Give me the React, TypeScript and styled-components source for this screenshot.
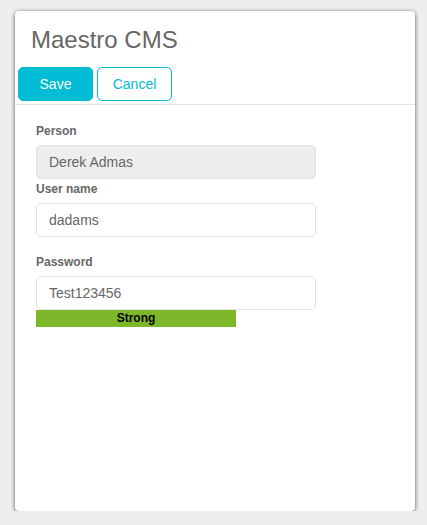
import { createGlobalStyle, styled } from "styled-components"

const GlobalStyle = createGlobalStyle`
  html, body {
    margin: 0;
    background: #eeeeee;
  }
  body {
    padding: 11px 0 0 15px;
    font-family: "Liberation Sans", Arial, sans-serif;
  }
`

const Card = styled.div`
  width: 400px;
  height: 500px;
  background: #ffffff;
  border-radius: 4px;
  box-shadow: 0 1px 4px rgba(0, 0, 0, 0.65);
  display: flex;
  flex-direction: column;
`

const Header = styled.div`
  padding: 15px 0 0 0;
  border-bottom: 1px solid #e4e4e4;
`

const Title = styled.h1`
  margin: 0 0 13px 16px;
  font-size: 24px;
  font-weight: normal;
  line-height: 28px;
  color: #666666;
`

const Toolbar = styled.div`
  display: flex;
  gap: 4px;
  padding: 0 0 3px 3px;
`

const Button = styled.button<{ $primary?: boolean }>`
  width: 75px;
  height: 34px;
  box-sizing: border-box;
  border-radius: 5px;
  font-family: inherit;
  font-size: 14px;
  cursor: pointer;
  border: 1px solid #00bcd4;
  background: ${(p) => (p.$primary ? "#00bcd4" : "#ffffff")};
  color: ${(p) => (p.$primary ? "#ffffff" : "#00bcd4")};
`

const Form = styled.div`
  padding: 19px 0 0 21px;
  display: flex;
  flex-direction: column;
`

const Field = styled.div<{ $gap: number }>`
  display: flex;
  flex-direction: column;
  margin-top: ${(p) => p.$gap}px;
`

const Label = styled.label`
  font-size: 12px;
  font-weight: bold;
  line-height: 14px;
  color: #666666;
  margin-bottom: 7px;
`

const Input = styled.input<{ $readOnly?: boolean }>`
  width: 280px;
  height: 34px;
  box-sizing: border-box;
  padding: 0 12px;
  border: 1px solid #e2e2e2;
  border-radius: 5px;
  background: ${(p) => (p.$readOnly ? "#eeeeee" : "#ffffff")};
  font-family: inherit;
  font-size: 14px;
  color: #666666;
  outline: none;
`

const Strength = styled.div`
  width: 200px;
  height: 17px;
  background: #7cb82a;
  color: #000000;
  font-size: 12px;
  font-weight: bold;
  line-height: 17px;
  text-align: center;
`

export default function App() {
  return (
    <>
      <GlobalStyle />
      <Card>
        <Header>
          <Title>Maestro CMS</Title>
          <Toolbar>
            <Button $primary>Save</Button>
            <Button>Cancel</Button>
          </Toolbar>
        </Header>
        <Form>
          <Field $gap={0}>
            <Label>Person</Label>
            <Input $readOnly readOnly value="Derek Admas" />
          </Field>
          <Field $gap={3}>
            <Label>User name</Label>
            <Input readOnly value="dadams" />
          </Field>
          <Field $gap={18}>
            <Label>Password</Label>
            <Input readOnly value="Test123456" />
            <Strength>Strong</Strength>
          </Field>
        </Form>
      </Card>
    </>
  )
}
